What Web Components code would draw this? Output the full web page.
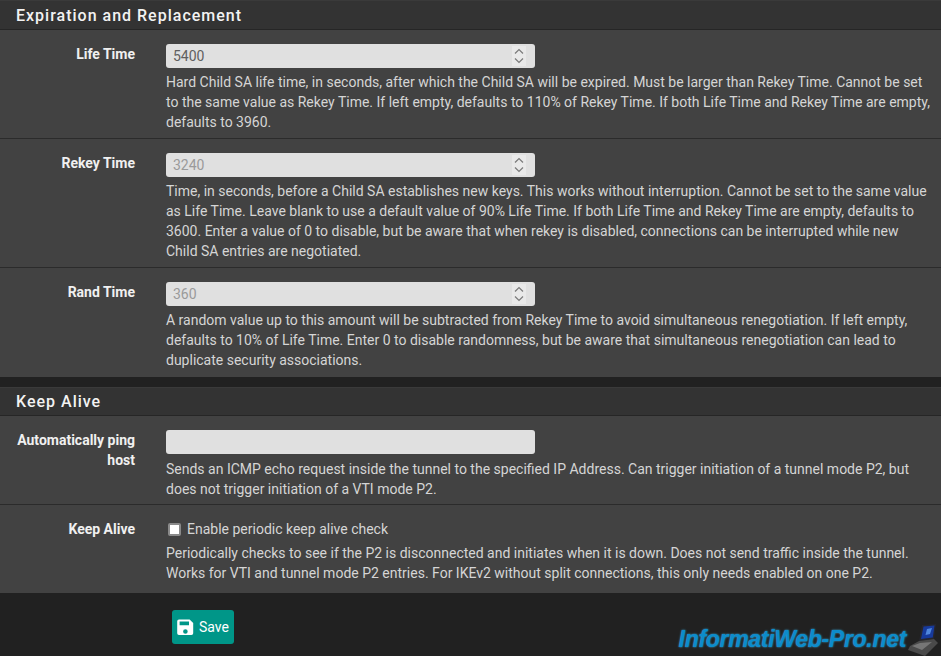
<!DOCTYPE html>
<html>
<head>
<meta charset="utf-8">
<title>Expiration and Replacement</title>
<style>
  html, body { margin:0; height:656px; overflow:hidden; background:#212121; }
  body { font-family:Roboto, "Liberation Sans", sans-serif; font-size:14px; color:#d5d5d5; }
</style>
</head>
<body>
<pf-panel heading="Expiration and Replacement" style="--head-top:1px">
  <pf-row label="Life Time">
    <pf-input value="5400" spin></pf-input>
    <pf-help>Hard Child SA life time, in seconds, after which the Child SA will be expired. Must be larger than Rekey Time. Cannot be set to the same value as Rekey Time. If left empty, defaults to 110% of Rekey Time. If both Life Time and Rekey Time are empty, defaults to 3960.</pf-help>
  </pf-row>
  <pf-row label="Rekey Time">
    <pf-input placeholder="3240" spin></pf-input>
    <pf-help>Time, in seconds, before a Child SA establishes new keys. This works without interruption. Cannot be set to the same value as Life Time. Leave blank to use a default value of 90% Life Time. If both Life Time and Rekey Time are empty, defaults to 3600. Enter a value of 0 to disable, but be aware that when rekey is disabled, connections can be interrupted while new Child SA entries are negotiated.</pf-help>
  </pf-row>
  <pf-row label="Rand Time">
    <pf-input placeholder="360" spin></pf-input>
    <pf-help>A random value up to this amount will be subtracted from Rekey Time to avoid simultaneous renegotiation. If left empty, defaults to 10% of Life Time. Enter 0 to disable randomness, but be aware that simultaneous renegotiation can lead to duplicate security associations.</pf-help>
  </pf-row>
</pf-panel>
<pf-panel heading="Keep Alive" style="margin-top:10px">
  <pf-row label="Automatically ping host" style="padding-bottom:5px">
    <pf-input></pf-input>
    <pf-help style="margin-top:5px">Sends an ICMP echo request inside the tunnel to the specified IP Address. Can trigger initiation of a tunnel mode P2, but does not trigger initiation of a VTI mode P2.</pf-help>
  </pf-row>
  <pf-row label="Keep Alive" style="padding-bottom:10px">
    <pf-check>Enable periodic keep alive check</pf-check>
    <pf-help>Periodically checks to see if the P2 is disconnected and initiates when it is down. Does not send traffic inside the tunnel. Works for VTI and tunnel mode P2 entries. For IKEv2 without split connections, this only needs enabled on one P2.</pf-help>
  </pf-row>
</pf-panel>
<pf-footer>
  <pf-save>Save</pf-save>
  <pf-mark slot="mark">InformatiWeb-Pro.net</pf-mark>
</pf-footer>

<script>
// section with a dark heading bar
class PfPanel extends HTMLElement {
  constructor(){
    super();
    this.attachShadow({mode:"open"}).innerHTML = `
<style>
  :host { display:block; background:#424242; }
  h2 {
    margin:0; height:29px; padding:0 16px; box-sizing:content-box;
    padding-top:var(--head-top, 0px);
    background:#333; box-shadow:inset 0 -1px 0 #262626, inset 0 1px 0 #3a3a3a;
    font:500 16px/30px Roboto, sans-serif; letter-spacing:1px; color:#f2f2f2;
  }
</style>
<h2></h2>
<slot></slot>`;
  }
  connectedCallback(){
    this.shadowRoot.querySelector("h2").textContent = this.getAttribute("heading");
  }
}

// label column + control column
class PfRow extends HTMLElement {
  constructor(){
    super();
    this.attachShadow({mode:"open"}).innerHTML = `
<style>
  :host {
    display:grid; grid-template-columns:136px 1fr; column-gap:30px;
    padding:14px 10px 6px 0; border-bottom:1px solid #2b2b2b;
  }
  :host(:last-child) { border-bottom:0; padding-bottom:7px; }
  .label { font-weight:700; font-size:14px; line-height:20px; color:#f0f0f0; text-align:right; padding:0 1px 0 16px; }
</style>
<div class="label"></div>
<div><slot></slot></div>`;
  }
  connectedCallback(){
    this.shadowRoot.querySelector(".label").textContent = this.getAttribute("label");
  }
}

class PfInput extends HTMLElement {
  constructor(){
    super();
    this.attachShadow({mode:"open"}).innerHTML = `
<style>
  :host { display:block; width:369px; height:24px; }
  .box {
    height:24px; box-sizing:border-box; padding:0 7px; border-radius:3px; background:#e0e0e0;
    display:flex; align-items:center; justify-content:space-between;
    font-size:14px; color:#5f5f5f;
  }
  .box.ph { color:#9a9a9a; }
  svg { display:block; margin-right:2px; }
</style>
<div class="box"><span></span></div>`;
  }
  connectedCallback(){
    const box = this.shadowRoot.querySelector(".box");
    const val = this.getAttribute("value");
    const ph = this.getAttribute("placeholder");
    box.querySelector("span").textContent = val || ph || "";
    if (ph) box.classList.add("ph");
    if (this.hasAttribute("spin")) {
      box.insertAdjacentHTML("beforeend", `<svg width="14" height="20" viewBox="0 0 14 20" fill="none" stroke="#7a7a7a" stroke-width="1.2"><rect width="14" height="20" fill="#e9e9e9" stroke="none"/><path d="M3 7.5 7 3.5 11 7.5"/><path d="M3 12.5 7 16.5 11 12.5"/></svg>`);
    }
  }
}

class PfHelp extends HTMLElement {
  constructor(){
    super();
    this.attachShadow({mode:"open"}).innerHTML = `
<style>
  :host { display:block; margin-top:4px; font-size:14px; line-height:20px; color:#d5d5d5; }
</style>
<slot></slot>`;
  }
}

class PfCheck extends HTMLElement {
  constructor(){
    super();
    this.attachShadow({mode:"open"}).innerHTML = `
<style>
  :host { display:flex; align-items:center; height:20px; margin-bottom:1px; font-size:14px; color:#d5d5d5; }
  i { width:13px; height:13px; box-sizing:border-box; margin:0 6px 0 2px; background:#fff; border:2px solid #8a8a8a; border-radius:2px; }
</style>
<i></i><slot></slot>`;
  }
}

class PfFooter extends HTMLElement {
  constructor(){
    super();
    this.attachShadow({mode:"open"}).innerHTML = `
<style>
  :host { display:block; position:relative; padding:17px 0 0 172px; }
  .mark { position:absolute; right:0; top:31px; }
</style>
<slot></slot>
<div class="mark"><slot name="mark"></slot></div>`;
  }
}

class PfSave extends HTMLElement {
  constructor(){
    super();
    this.attachShadow({mode:"open"}).innerHTML = `
<style>
  :host {
    display:inline-flex; align-items:center; gap:5px; box-sizing:border-box;
    width:62px; height:34px; padding:0 0 0 5px; border-radius:3px;
    background:#009688; color:#fff; font-size:14px; line-height:20px;
  }
  svg { display:block; margin-top:1px; }
</style>
<svg width="17" height="17" viewBox="0 0 17 17"><path fill="#fff" fill-rule="evenodd" d="M2 .5H12.6L16.2 4.1V14.2A1.8 1.8 0 0 1 14.4 16H2A1.8 1.8 0 0 1 .2 14.2V2.3A1.8 1.8 0 0 1 2 .5ZM2.6 2.6V6.2H12V2.6ZM8.4 10.2A2.3 2.3 0 1 0 8.4 14.8 2.3 2.3 0 1 0 8.4 10.2Z"/></svg>
<span><slot></slot></span>`;
  }
}

// watermark, bottom right corner
class PfMark extends HTMLElement {
  constructor(){
    super();
    this.attachShadow({mode:"open"}).innerHTML = `
<style>
  :host { display:flex; align-items:flex-end; }
  span {
    font:italic 700 23px/28px "Liberation Sans", Arial, sans-serif; letter-spacing:-.3px;
    color:#0c8ccb; text-shadow:0 0 2px #3fb4e8; margin-bottom:3px;
  }
  svg { display:block; margin-left:2px; }
</style>
<span><slot></slot></span>
<svg width="33" height="32" viewBox="0 0 33 32">
  <path fill="#26262e" d="M14 1 28 0 26 15 11 17Z"/>
  <path fill="#173a9c" d="M15.5 2.5 26.5 1.5 24.8 13.5 13 15Z"/>
  <path fill="#4f86dc" d="M19 5 24 4 22 10 17.5 11Z"/>
  <path fill="#4a4a4a" d="M11 17 26 15 30 19 17 32 0 26 2 22Z"/>
  <path fill="#767676" d="M4 22 12 19 24 18 14 26Z"/>
</svg>`;
  }
}

customElements.define("pf-panel", PfPanel);
customElements.define("pf-row", PfRow);
customElements.define("pf-input", PfInput);
customElements.define("pf-help", PfHelp);
customElements.define("pf-check", PfCheck);
customElements.define("pf-footer", PfFooter);
customElements.define("pf-save", PfSave);
customElements.define("pf-mark", PfMark);
</script>
</body>
</html>
